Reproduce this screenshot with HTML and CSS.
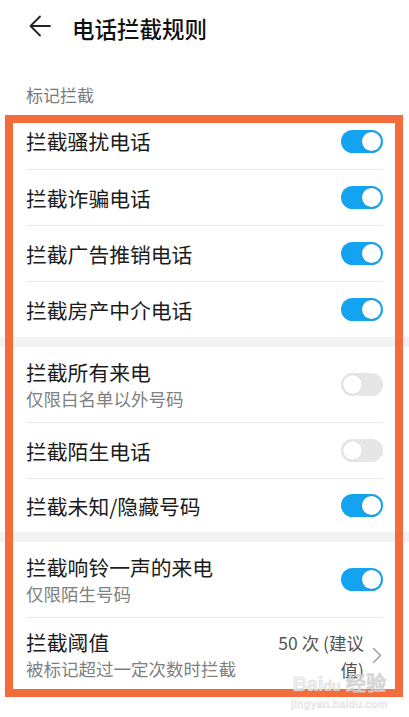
FILE: index.html
```html
<!DOCTYPE html>
<html lang="zh-CN">
<head>
  <meta charset="UTF-8">
  <title>电话拦截规则</title>
  <link rel="stylesheet" href="styles.css">
</head>
<body>
  <div class="page">
    <header class="topbar">
      <svg class="back" width="22" height="22" viewBox="0 0 22 22">
        <path d="M1.5 11 H21 M11 1.5 L1.5 11 L11 20.5" fill="none" stroke="#222" stroke-width="1.8" stroke-linecap="round" stroke-linejoin="round"/>
      </svg>
      <h1>电话拦截规则</h1>
    </header>

    <div class="section-label">标记拦截</div>

    <div class="group">
      <div class="row"><div class="text"><div class="title">拦截骚扰电话</div></div><span class="switch on"></span></div>
      <div class="row"><div class="text"><div class="title">拦截诈骗电话</div></div><span class="switch on"></span></div>
      <div class="row"><div class="text"><div class="title">拦截广告推销电话</div></div><span class="switch on"></span></div>
      <div class="row"><div class="text"><div class="title">拦截房产中介电话</div></div><span class="switch on"></span></div>
    </div>

    <div class="band"></div>

    <div class="group">
      <div class="row tall"><div class="text"><div class="title">拦截所有来电</div><div class="sub">仅限白名单以外号码</div></div><span class="switch"></span></div>
      <div class="row"><div class="text"><div class="title">拦截陌生电话</div></div><span class="switch"></span></div>
      <div class="row short"><div class="text"><div class="title">拦截未知/隐藏号码</div></div><span class="switch on"></span></div>
    </div>

    <div class="band"></div>

    <div class="group">
      <div class="row tall"><div class="text"><div class="title">拦截响铃一声的来电</div><div class="sub">仅限陌生号码</div></div><span class="switch on"></span></div>
      <div class="row tall">
        <div class="text"><div class="title">拦截阈值</div><div class="sub">被标记超过一定次数时拦截</div></div>
        <div class="value">50 次 (建议值)</div>
        <svg class="chev" width="10" height="17" viewBox="0 0 10 17">
          <path d="M1.5 1.5 L8.5 8.5 L1.5 15.5" fill="none" stroke="#999" stroke-width="1.4" stroke-linecap="round" stroke-linejoin="round"/>
        </svg>
      </div>
    </div>

    <div class="highlight"></div>
    <div class="watermark">
      <div class="wm-logo">Bai<span class="wm-paw">du</span> 经验</div>
      <div class="wm-url">jingyan.baidu.com</div>
    </div>
  </div>
</body>
</html>
```

FILE: styles.css
```css
body, h1 {
  margin: 0;
  padding: 0;
}

body {
  font-family: "Noto Sans CJK SC", "Noto Sans", sans-serif;
  background-color: #fff;
  color: #1c1c1c;
}

.page {
  position: relative;
  width: 409px;
  height: 717px;
  overflow: hidden;
}

.topbar {
  height: 56px;
  display: flex;
  align-items: center;
  padding-left: 29px;
}
.back {
  margin-right: 21px;
  margin-top: -4px;
}
.topbar h1 {
  font-size: 22.5px;
  font-weight: 500;
  color: #111;
  line-height: 30px;
  margin-top: -1px;
}

.section-label {
  font-size: 17px;
  line-height: 24px;
  color: #7a7a7a;
  padding: 27px 26px 6px;
}

.group {
  padding: 0 26px;
}
.row {
  height: 56px;
  display: flex;
  align-items: center;
  border-top: 1px solid #e9e9e9;
  box-sizing: border-box;
}
.row:first-child {
  border-top: none;
}
.row.tall {
  height: 75px;
}
.row.short {
  height: 54px;
}
.text {
  flex: 1;
}
.title {
  font-size: 20.8px;
  line-height: 28px;
}
.sub {
  font-size: 17.5px;
  line-height: 26px;
  color: #808080;
}

.switch {
  position: relative;
  width: 42px;
  height: 23px;
  border-radius: 12px;
  background-color: #e6e6e6;
  flex-shrink: 0;
}
.switch::after {
  content: "";
  position: absolute;
  top: 2px;
  left: 2px;
  width: 19px;
  height: 19px;
  border-radius: 50%;
  background-color: #fff;
  box-shadow: 0 0 1px rgba(0, 0, 0, 0.25);
}
.switch.on {
  background-color: #14a3f0;
}
.switch.on::after {
  left: 21px;
}

.band {
  height: 10px;
  background-color: #f3f3f3;
}

.value {
  width: 92px;
  text-align: right;
  font-size: 17.5px;
  line-height: 27px;
  color: #555;
  margin-top: 2px;
}
.chev {
  margin-left: 8px;
  margin-right: 1px;
}

.highlight {
  position: absolute;
  left: 5px;
  top: 115px;
  width: 398px;
  height: 582px;
  border: 8px solid #f26d3b;
  box-sizing: border-box;
}

.watermark {
  position: absolute;
  left: 291px;
  top: 675px;
  color: rgba(235, 235, 235, 0.8);
  text-align: center;
}
.wm-logo {
  font-family: "Liberation Sans", sans-serif;
  font-size: 20px;
  font-weight: bold;
  line-height: 18px;
  -webkit-text-stroke: 0.6px rgba(190, 190, 190, 0.5);
}
.wm-paw {
  font-size: 14px;
}
.wm-url {
  font-family: "Liberation Sans", sans-serif;
  font-size: 11px;
  line-height: 14px;
  margin-top: 2px;
  font-weight: bold;
  -webkit-text-stroke: 0.3px rgba(190, 190, 190, 0.5);
}
```
